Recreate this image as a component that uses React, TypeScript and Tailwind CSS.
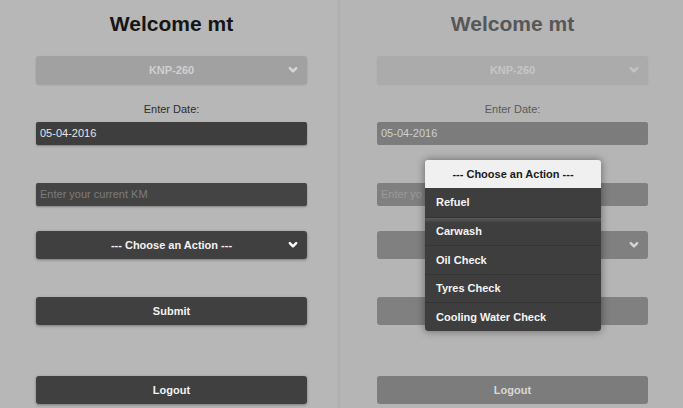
import React from "react";

const Chevron = ({ color }: { color: string }) => (
  <svg width="10" height="7" viewBox="0 0 10 7" className="absolute right-[9px] top-1/2 -translate-y-1/2">
    <polyline points="1.8,1.6 5,4.8 8.2,1.6" fill="none" stroke={color} strokeWidth="2.4" strokeLinecap="round" strokeLinejoin="round" />
  </svg>
);

const Panel = ({ dim, children }: { dim?: boolean; children?: React.ReactNode }) => (
  <div className="relative flex flex-col items-start pl-[36px] h-[408px]">
    <div className={`w-[271px] h-[48px] flex items-center justify-center text-[21px] font-bold ${dim ? "text-[#575757]" : "text-[#151515]"}`}>
      Welcome mt
    </div>
    <div className={`relative mt-[8px] w-[271px] h-[28px] rounded-[3px] flex items-center justify-center text-[11px] font-bold ${dim ? "bg-[#ababab] text-[#c6c6c6] shadow-[0_1px_2px_rgba(0,0,0,0.08)]" : "bg-[#a1a1a1] text-[#d0d0d0] shadow-[0_1px_2px_rgba(0,0,0,0.15)]"}`}>
      KNP-260
      <Chevron color={dim ? "#c4c4c4" : "#d6d6d6"} />
    </div>
    <div className={`mt-[17px] w-[271px] h-[16px] leading-[16px] text-center text-[11px] ${dim ? "text-[#5a5a5a]" : "text-[#2e2e2e]"}`}>
      Enter Date:
    </div>
    <div className={`mt-[5px] w-[271px] h-[23px] rounded-[2px] flex items-center pl-[4px] text-[11px] ${dim ? "bg-[#7c7c7c] text-[#cfcfcf]" : "bg-[#3e3e3e] text-[#e6e6e6] shadow-[0_1px_2px_rgba(0,0,0,0.3)]"}`}>
      05-04-2016
    </div>
    <div className={`mt-[38px] w-[271px] h-[23px] rounded-[2px] flex items-center pl-[4px] text-[11px] ${dim ? "bg-[#808080] text-[#9a9a9a]" : "bg-[#444444] text-[#7c7c7c] shadow-[0_1px_2px_rgba(0,0,0,0.3)]"}`}>
      {dim ? "Enter yo" : "Enter your current KM"}
    </div>
    <div className={`relative mt-[25px] w-[271px] h-[28px] rounded-[3px] flex items-center justify-center text-[11px] font-bold ${dim ? "bg-[#808080] text-[#cfcfcf]" : "bg-[#404040] text-[#f2f2f2] shadow-[0_1px_3px_rgba(0,0,0,0.35)]"}`}>
      {dim ? null : "--- Choose an Action ---"}
      <Chevron color={dim ? "#d4d4d4" : "#ffffff"} />
    </div>
    <div className={`mt-[38px] w-[271px] h-[28px] rounded-[3px] flex items-center justify-center text-[11px] font-bold ${dim ? "bg-[#808080] text-[#cfcfcf]" : "bg-[#404040] text-[#f2f2f2] shadow-[0_1px_3px_rgba(0,0,0,0.35)]"}`}>
      {dim ? null : "Submit"}
    </div>
    <div className={`mt-[51px] w-[271px] h-[28px] rounded-[3px] flex items-center justify-center text-[11px] font-bold ${dim ? "bg-[#7c7c7c] text-[#d8d8d8]" : "bg-[#404040] text-[#f2f2f2] shadow-[0_1px_3px_rgba(0,0,0,0.35)]"}`}>
      Logout
    </div>
    {children}
  </div>
);

const items = ["Refuel", "Carwash", "Oil Check", "Tyres Check", "Cooling Water Check"];

export default function App() {
  return (
    <div
      className="w-[683px] h-[408px] overflow-hidden bg-[#b7b7b7] flex"
      style={{ fontFamily: '"Liberation Sans", Arial, sans-serif' }}
    >
      <div className="w-[337px] shrink-0">
        <Panel />
      </div>
      <div className="w-[4px] shrink-0 bg-[#afafaf] border-x border-[#b3b3b3]" />
      <div className="w-[342px] shrink-0 bg-[#b5b5b5]">
        <Panel dim>
          <div className="absolute left-[84px] top-[160px] w-[176px] rounded-[3px] overflow-hidden shadow-[0_0_8px_rgba(0,0,0,0.45)]">
            <div className="h-[28px] bg-[#f0f0f0] flex items-center justify-center text-[11px] font-bold text-[#1a1a1a]">
              --- Choose an Action ---
            </div>
            {items.map((it, i) => (
              <div
                key={it}
                className={`h-[28.5px] flex items-center pl-[11px] text-[11px] font-bold text-[#f4f4f4] bg-[#3e3e3e] ${i === 0 ? "" : "border-t border-[#353535]"} ${i === 1 ? "bg-[linear-gradient(#5a5a5a,#3e3e3e_5px)]" : ""}`}
              >
                {it}
              </div>
            ))}
          </div>
        </Panel>
      </div>
    </div>
  );
}
